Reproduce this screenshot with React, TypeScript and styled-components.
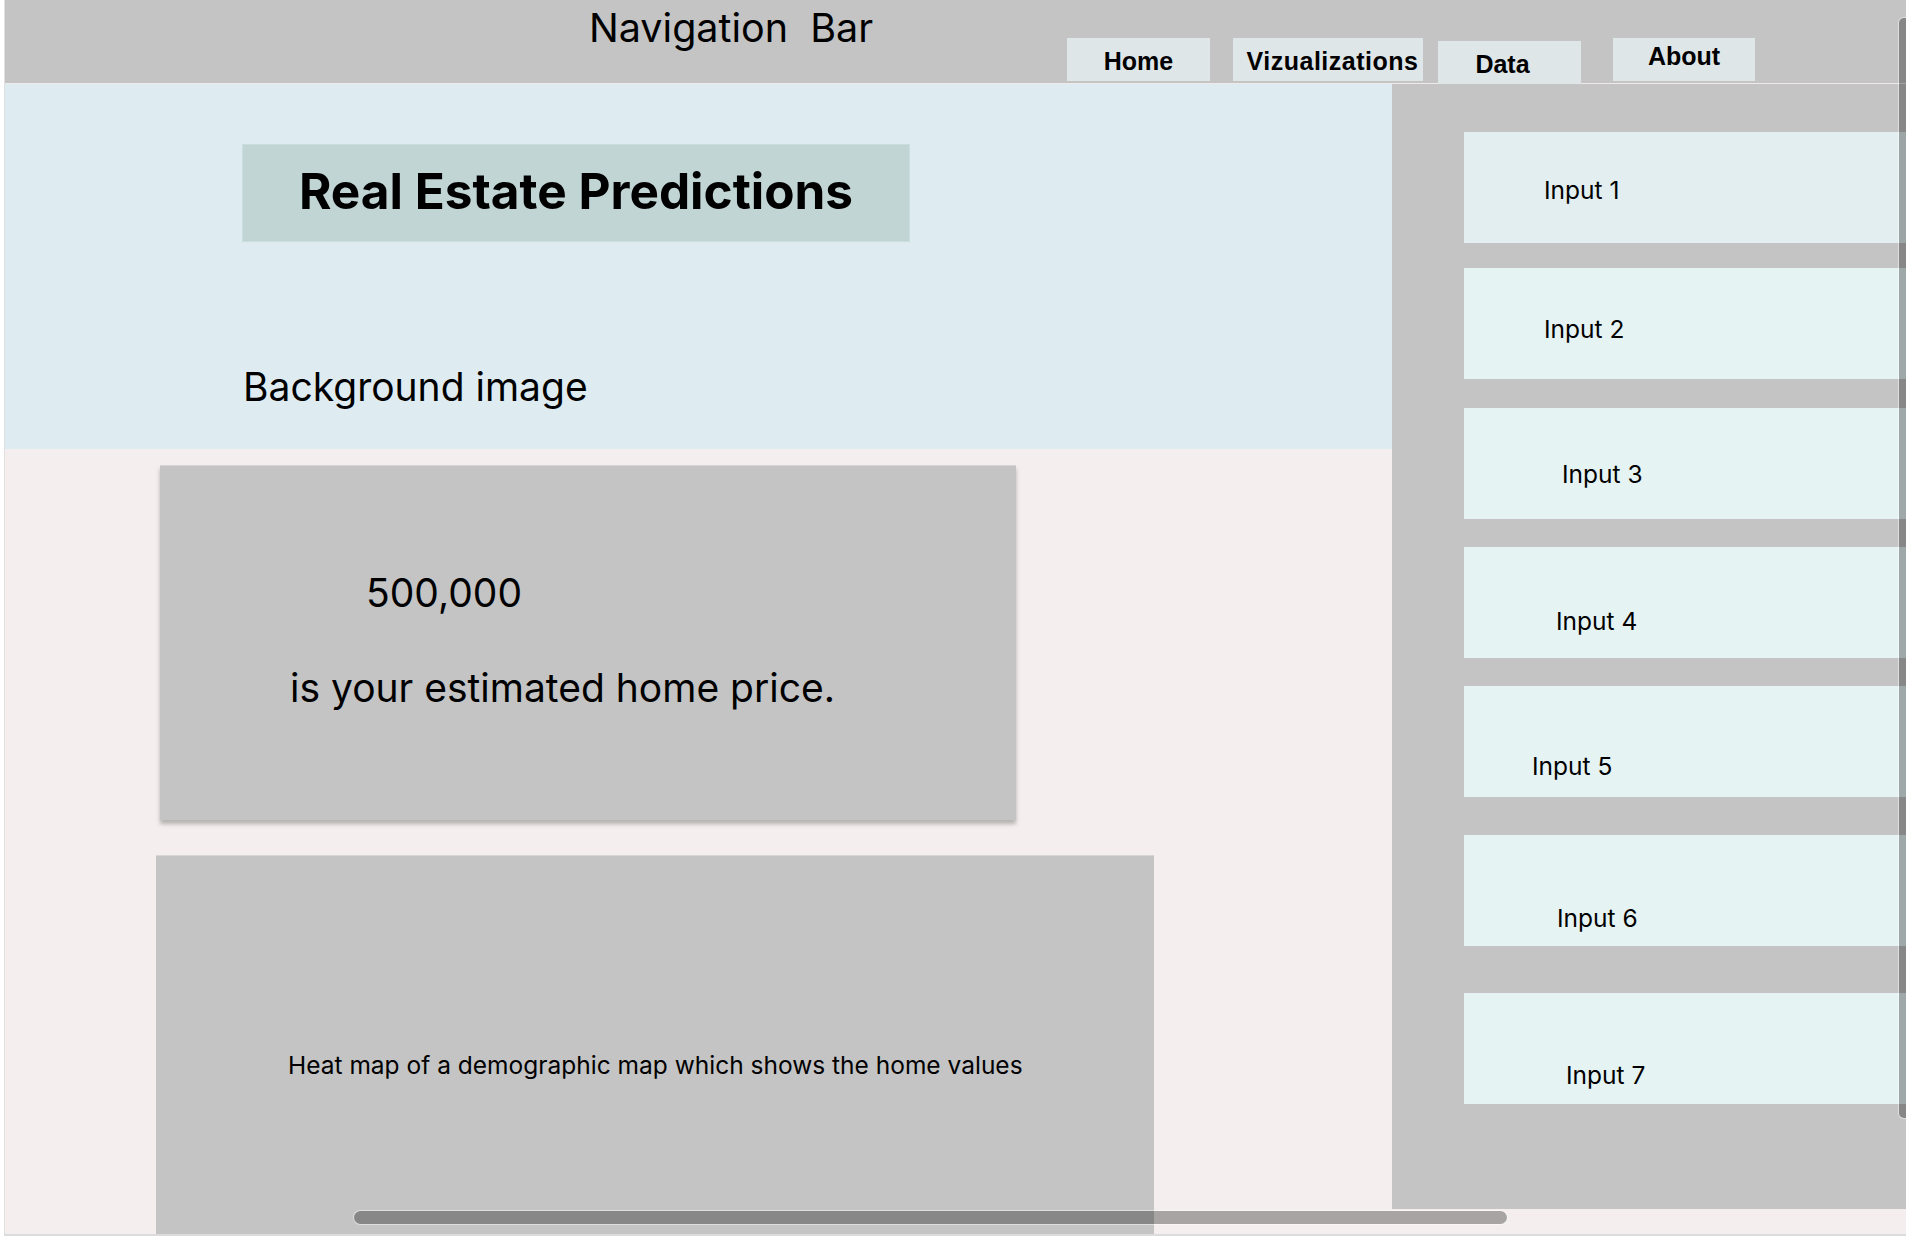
import React from 'react';
import styled, { createGlobalStyle } from 'styled-components';

const GlobalStyle = createGlobalStyle`
  html, body {
    margin: 0;
    padding: 0;
    background: #ffffff;
    overflow: hidden;
  }
  body {
    font-family: Inter, "Noto Sans", sans-serif;
    color: #000;
  }
`;

const Frame = styled.div`
  position: relative;
  margin-left: 4px;
  width: 1902px;
  height: 1234px;
  border-left: 1px solid #e0e0e0;
  border-bottom: 2px solid #dcdcdc;
  background: #f4eeee;
  overflow: hidden;
`;

const NavBar = styled.header`
  display: flex;
  align-items: flex-start;
  height: 84px;
  background: #c4c4c4;
  border-bottom: 1px solid #f1eaea;
  box-sizing: border-box;
`;

const NavTitle = styled.div`
  flex: 0 0 auto;
  width: 478px;
  margin-left: 584px;
  padding-top: 4px;
  font-size: 39.5px;
  line-height: 48px;
  white-space: pre;
`;

// $nudge > 0 moves the label right, < 0 moves it left
const NavButton = styled.div<{
  $gap: number;
  $top: number;
  $width: number;
  $lift?: number;
  $nudge?: number;
  $spacing?: number;
}>`
  display: flex;
  align-items: center;
  justify-content: center;
  box-sizing: border-box;
  width: ${(p) => p.$width}px;
  height: 43px;
  margin-left: ${(p) => p.$gap}px;
  margin-top: ${(p) => p.$top}px;
  padding-top: 3px;
  padding-bottom: ${(p) => p.$lift ?? 0}px;
  padding-left: ${(p) => Math.max(0, p.$nudge ?? 0)}px;
  padding-right: ${(p) => Math.max(0, -(p.$nudge ?? 0))}px;
  background: #dfe6e8;
  font-family: "Liberation Sans", Arial, sans-serif;
  font-weight: 700;
  font-size: 25px;
  letter-spacing: ${(p) => p.$spacing ?? 0}px;
  line-height: 1;
  white-space: nowrap;
`;

const Body = styled.div`
  display: flex;
  align-items: flex-start;
`;

const Main = styled.main`
  flex: 0 0 1387px;
  display: flex;
  flex-direction: column;
`;

const Hero = styled.section`
  display: flex;
  flex-direction: column;
  align-items: flex-start;
  height: 365px;
  box-sizing: border-box;
  padding: 60px 0 0 237px;
  background: #deecf2;
`;

const TitleBox = styled.div`
  display: flex;
  align-items: center;
  justify-content: center;
  width: 668px;
  height: 98px;
  background: #c1d5d5;
  border: 1px solid #cbdede;
  box-sizing: border-box;
`;

const Title = styled.h1`
  margin: 0 0 5px;
  font-size: 49.5px;
  font-weight: 700;
  line-height: 58px;
`;

const HeroNote = styled.p`
  margin: 121px 0 0 1px;
  font-size: 39px;
  line-height: 48px;
`;

const PriceCard = styled.section`
  margin: 16px 0 0 155px;
  width: 856px;
  height: 355px;
  box-sizing: border-box;
  padding-top: 103px;
  background: #c4c4c4;
  border-top: 1px solid #d4d4d4;
  box-shadow: 0 4px 4px rgba(0, 0, 0, 0.25);
`;

const PriceLine = styled.p<{ $indent: number; $gap?: number }>`
  margin: ${(p) => p.$gap ?? 0}px 0 0 ${(p) => p.$indent}px;
  font-size: 39px;
  line-height: 48px;
`;

const MapBox = styled.section`
  margin: 35px 0 0 151px;
  width: 998px;
  height: 420px;
  box-sizing: border-box;
  padding: 195px 0 0 132px;
  background: #c4c4c4;
  border-top: 1px solid #d6d6d6;
`;

const MapCaption = styled.p`
  margin: 0;
  font-size: 24.5px;
  line-height: 29px;
`;

const SidePanel = styled.aside`
  flex: 0 0 515px;
  height: 1125px;
  box-sizing: border-box;
  padding: 0 0 0 72px;
  background: #c4c4c4;
  overflow: hidden;
  display: flex;
  flex-direction: column;
`;

const InputRow = styled.div<{ $gap: number; $padTop: number; $padLeft: number; $tint?: boolean }>`
  flex: 0 0 111px;
  width: 600px;
  box-sizing: border-box;
  margin-top: ${(p) => p.$gap}px;
  padding: ${(p) => p.$padTop}px 0 0 ${(p) => p.$padLeft}px;
  background: ${(p) => (p.$tint ? '#e2eeef' : '#e6f3f3')};
  font-size: 24.5px;
  line-height: 29px;
`;

const VScroll = styled.div`
  position: absolute;
  left: 1894px;
  top: 18px;
  width: 8px;
  height: 1100px;
  border-radius: 5px 0 0 5px;
  background: rgba(0, 0, 0, 0.31);
  box-shadow: 0 0 0 1px rgba(255, 255, 255, 0.45);
`;

const HScroll = styled.div`
  position: absolute;
  left: 349px;
  top: 1211px;
  width: 1153px;
  height: 13px;
  border-radius: 7px;
  background: rgba(0, 0, 0, 0.31);
  box-shadow: 0 0 0 1px rgba(255, 255, 255, 0.45);
`;

const navItems = [
  { label: 'Home', gap: 0, top: 38, width: 143 },
  { label: 'Vizualizations', gap: 23, top: 38, width: 190, spacing: 0.5, nudge: 9 },
  { label: 'Data', gap: 15, top: 41, width: 143, lift: -2, nudge: -14 },
  { label: 'About', gap: 32, top: 38, width: 142, lift: 9 },
];

const inputs = [
  { label: 'Input 1', gap: 48, padTop: 44, padLeft: 80, tint: true },
  { label: 'Input 2', gap: 25, padTop: 47, padLeft: 80 },
  { label: 'Input 3', gap: 29, padTop: 52, padLeft: 98 },
  { label: 'Input 4', gap: 28, padTop: 60, padLeft: 92 },
  { label: 'Input 5', gap: 28, padTop: 66, padLeft: 68 },
  { label: 'Input 6', gap: 38, padTop: 69, padLeft: 93 },
  { label: 'Input 7', gap: 47, padTop: 68, padLeft: 102 },
];

export default function App() {
  return (
    <>
      <GlobalStyle />
      <Frame>
        <NavBar>
          <NavTitle>{'Navigation  Bar'}</NavTitle>
          {navItems.map((n) => (
            <NavButton
              key={n.label}
              $gap={n.gap}
              $top={n.top}
              $width={n.width}
              $lift={n.lift}
              $nudge={n.nudge}
              $spacing={n.spacing}
            >
              {n.label}
            </NavButton>
          ))}
        </NavBar>
        <Body>
          <Main>
            <Hero>
              <TitleBox>
                <Title>Real Estate Predictions</Title>
              </TitleBox>
              <HeroNote>Background image</HeroNote>
            </Hero>
            <PriceCard>
              <PriceLine $indent={206}>500,000</PriceLine>
              <PriceLine $indent={130} $gap={47}>
                is your estimated home price.
              </PriceLine>
            </PriceCard>
            <MapBox>
              <MapCaption>Heat map of a demographic map which shows the home values</MapCaption>
            </MapBox>
          </Main>
          <SidePanel>
            {inputs.map((i) => (
              <InputRow key={i.label} $gap={i.gap} $padTop={i.padTop} $padLeft={i.padLeft} $tint={i.tint}>
                {i.label}
              </InputRow>
            ))}
          </SidePanel>
        </Body>
        <VScroll />
        <HScroll />
      </Frame>
    </>
  );
}
